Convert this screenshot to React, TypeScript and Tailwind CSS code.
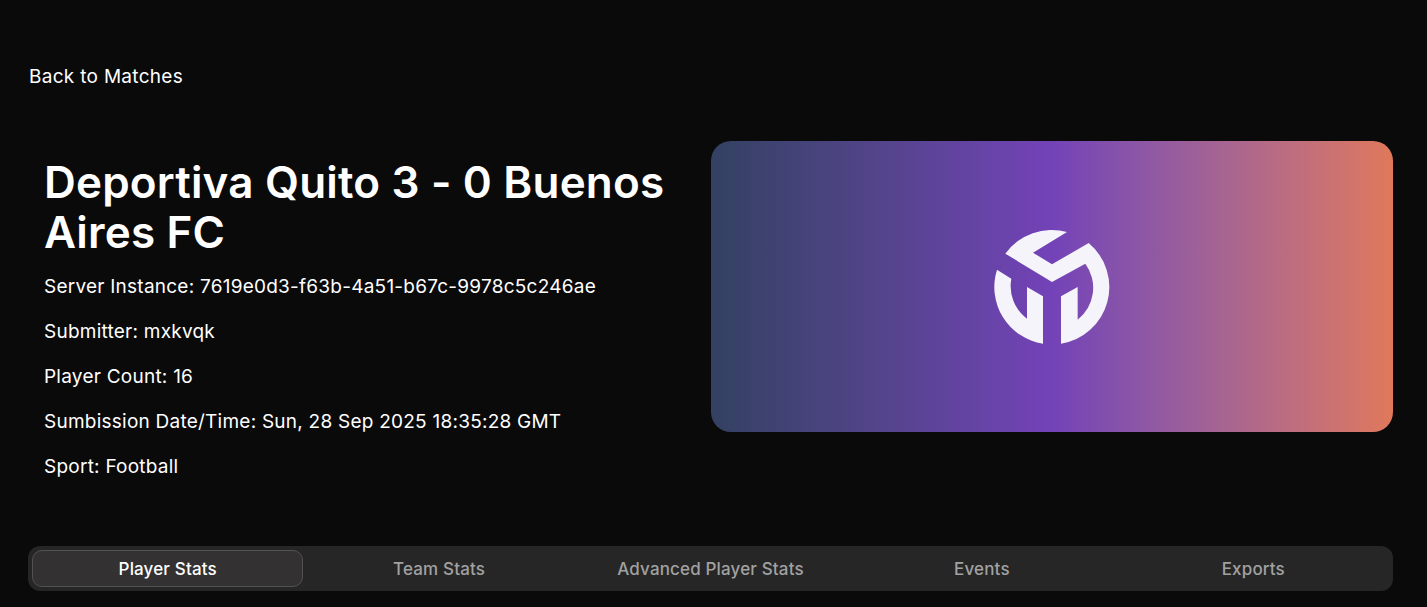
import React from 'react';

const tabs = ['Player Stats', 'Team Stats', 'Advanced Player Stats', 'Events', 'Exports'];
const details = [
  'Server Instance: 7619e0d3-f63b-4a51-b67c-9978c5c246ae',
  'Submitter: mxkvqk',
  'Player Count: 16',
  'Sumbission Date/Time: Sun, 28 Sep 2025 18:35:28 GMT',
  'Sport: Football',
];

const Logo: React.FC = () => (
  <svg width="180" height="150" viewBox="5 5 540 450" fill="#f6f4fb">
    <path d="M135 130 A172 172 0 0 1 320 65 L218 127 L275 162 L385 98 A172 172 0 0 1 302 400 L302 258 L352 230 L352 328 A122 122 0 0 0 375 160 L275 215 Z" />
    <path d="M110 178 L153 205 A122 122 0 0 0 200 325 L200 230 L248 258 L248 400 A172 172 0 0 1 110 178 Z" />
  </svg>
);

export default function App() {
  return (
    <div className="min-h-[607px] bg-[#0a0a0a] text-white pl-[28px] pr-[34px] font-['Inter',sans-serif] overflow-hidden">
      <div className="pt-[64px] h-[141px]">
        <a href="#" className="block pl-px text-[19px] leading-[25px] tracking-[0.3px]">Back to Matches</a>
      </div>

      <div className="grid grid-cols-2 h-[405px]">
        <div className="px-4 pt-[16px]">
          <h1 className="text-[44px] leading-[50px] font-semibold tracking-[0.18px] mb-[16px]">Deportiva Quito 3 - 0 Buenos Aires FC</h1>
          {details.map((line) => (
            <p key={line} className="text-[19px] leading-[28px] tracking-[0.24px] mb-[17px]">{line}</p>
          ))}
        </div>
        <div className="h-[291px] rounded-[20px] flex items-center justify-center bg-gradient-to-r from-[#334162] via-[#7342b8] to-[#e0785a]">
          <Logo />
        </div>
      </div>

      <div className="flex h-[45px] rounded-[12px] bg-[#262626] p-[4px]">
        {tabs.map((tab, i) => (
          <button
            key={tab}
            className={i === 0
              ? 'flex-1 pt-[2px] rounded-[10px] border border-[#525252] bg-[#333132] text-[17px] tracking-[0.15px] font-medium text-white'
              : 'flex-1 pt-[2px] rounded-[10px] border border-transparent text-[17px] tracking-[0.15px] font-medium text-[#a1a1a1]'}
          >
            {tab}
          </button>
        ))}
      </div>
    </div>
  );
}
